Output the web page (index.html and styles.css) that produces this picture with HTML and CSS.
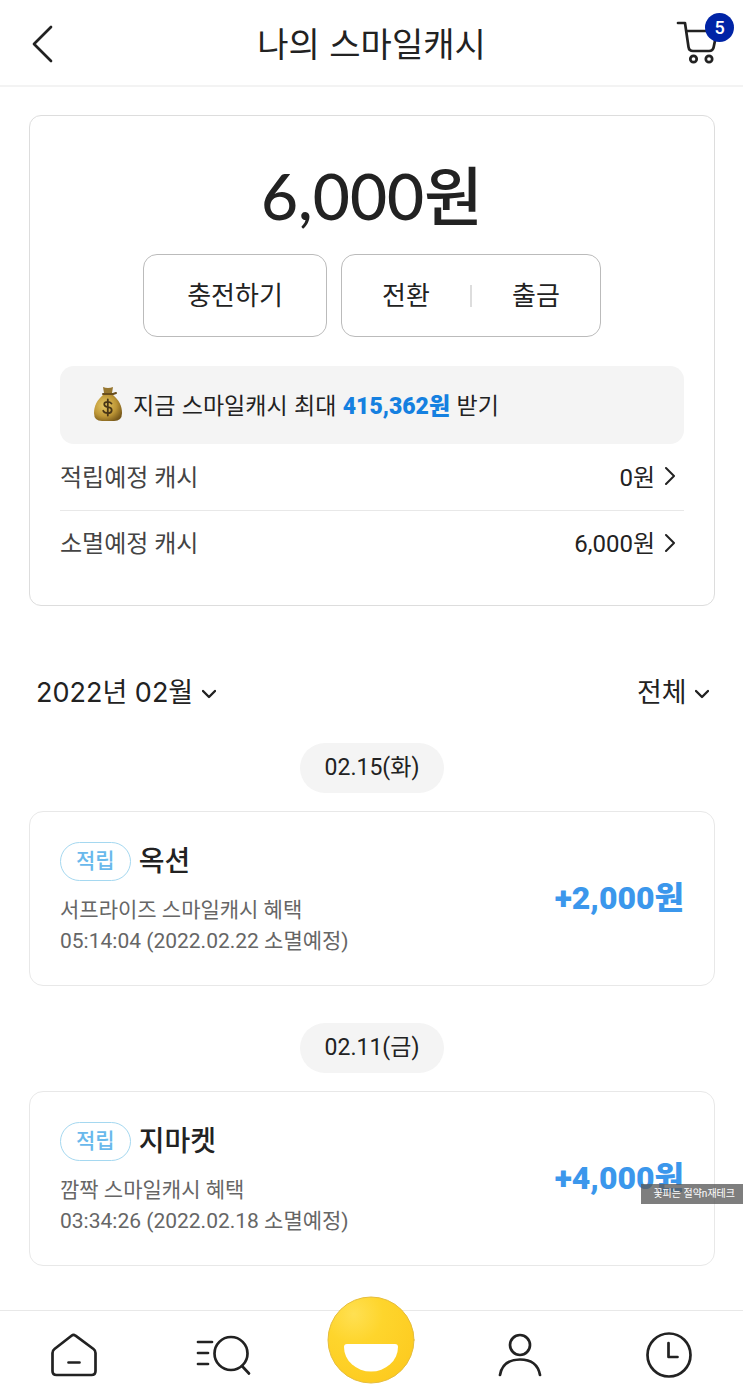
FILE: index.html
```html
<!DOCTYPE html>
<html lang="ko">
<head>
<meta charset="utf-8">
<meta name="viewport" content="width=device-width, initial-scale=1">
<title>나의 스마일캐시</title>
<link rel="stylesheet" href="styles.css">
</head>
<body>
<header class="topbar">
  <button class="icon-button back" type="button" aria-label="뒤로">
    <svg width="24" height="40" viewBox="0 0 24 40"><path d="M21 4 4 21l17 17"/></svg>
  </button>
  <h1 class="title">나의 스마일캐시</h1>
  <a class="cart" href="#cart" aria-label="장바구니">
    <svg width="44" height="44" viewBox="0 0 44 44"><path d="M3 2h7l3.500 24q.6 4 4.500 4h16q4 0 4.700-4L42 10H11.500"/><circle cx="18.500" cy="38" r="3.200"/><circle cx="34" cy="38" r="3.200"/></svg>
    <span class="cart-count">5</span>
  </a>
</header>

<main class="content">
  <section class="balance">
    <p class="balance-amount">6,000원</p>
    <div class="actions">
      <button class="action charge" type="button">충전하기</button>
      <div class="action-group">
        <button class="action" type="button">전환</button>
        <button class="action" type="button">출금</button>
      </div>
    </div>
    <a class="promo" href="#promo">
      <svg class="money-bag" width="30" height="36" viewBox="0 0 30 36" aria-hidden="true">
        <defs><radialGradient id="bag" cx=".38" cy=".4" r=".7"><stop offset="0" stop-color="#e8ca66"/><stop offset=".6" stop-color="#bd9636"/><stop offset="1" stop-color="#765719"/></radialGradient></defs>
        <path d="M10 9C4 14 1 20 1 27q0 8 8 8h12q8 0 8-8c0-7-3-13-9-18z" fill="url(#bag)"/>
        <path d="M10 1q5 2 10 0l-1 6h-8z" fill="#96762f"/>
        <path d="M10 8h10l3-1" fill="none" stroke="#684d1d" stroke-width="2" stroke-linecap="round"/>
        <path d="M18.500 17.500q-1.500-1.700-3.700-1.700c-5 0-4.500 4.700 0 5.300 5.400.7 5 6-.1 6-2.600 0-4-1-4.500-2.300M14.800 13.500v16" fill="none" stroke="#493615" stroke-width="1.800" stroke-linecap="round"/>
      </svg>
      <span>지금 스마일캐시 최대 <strong>415,362원</strong> 받기</span>
    </a>
    <a class="summary-row" href="#earned">
      <span class="summary-label">적립예정 캐시</span>
      <span class="summary-value">0원</span>
      <svg class="chevron" width="12" height="20" viewBox="0 0 12 20"><path d="M2 3l8 8-8 8"/></svg>
    </a>
    <a class="summary-row" href="#expiring">
      <span class="summary-label">소멸예정 캐시</span>
      <span class="summary-value">6,000원</span>
      <svg class="chevron" width="12" height="20" viewBox="0 0 12 20"><path d="M2 3l8 8-8 8"/></svg>
    </a>
  </section>

  <div class="filters">
    <label class="filter">
      <select aria-label="조회 월"><option>2022년 02월</option></select>
      <svg class="caret" width="14" height="14" viewBox="0 0 14 14"><path d="M1 6l6 6 6-6"/></svg>
    </label>
    <label class="filter">
      <select aria-label="내역 종류"><option>전체</option></select>
      <svg class="caret" width="14" height="14" viewBox="0 0 14 14"><path d="M1 6l6 6 6-6"/></svg>
    </label>
  </div>

  <section class="day">
    <h2 class="date">02.15(화)</h2>
    <article class="entry">
      <div class="entry-info">
        <div class="entry-head"><span class="badge">적립</span><h3 class="shop">옥션</h3></div>
        <p class="detail">서프라이즈 스마일캐시 혜택</p>
        <p class="detail">05:14:04 (2022.02.22 소멸예정)</p>
      </div>
      <strong class="entry-amount">+2,000원</strong>
    </article>
  </section>

  <section class="day">
    <h2 class="date">02.11(금)</h2>
    <article class="entry">
      <div class="entry-info">
        <div class="entry-head"><span class="badge">적립</span><h3 class="shop">지마켓</h3></div>
        <p class="detail">깜짝 스마일캐시 혜택</p>
        <p class="detail">03:34:26 (2022.02.18 소멸예정)</p>
      </div>
      <strong class="entry-amount">+4,000원</strong>
    </article>
  </section>
  <span class="watermark">꽃피는 절약n재테크</span>
</main>

<nav class="tabs">
  <a class="tab" href="#home" aria-label="홈"><svg width="46" height="44" viewBox="0 0 46 44"><path d="M20.500 2.700q2-1.600 4 0L42.500 16q2 1.500 2 4v18q0 4-4 4h-35q-4 0-4-4V20q0-2.500 2-4zM17.500 29.500h11"/></svg></a>
  <a class="tab" href="#search" aria-label="검색"><svg width="56" height="44" viewBox="0 0 56 44"><path d="M3 9h14M3 20h10M3 31h10M47 33l7 7.500"/><circle cx="36" cy="20.500" r="16.500"/></svg></a>
  <a class="tab tab-smile" href="#smile" aria-label="스마일"><svg class="smile" width="88" height="88" viewBox="0 0 88 88">
    <defs><radialGradient id="face" cx=".3" cy=".2" r=".85"><stop offset="0" stop-color="#ffe052"/><stop offset=".4" stop-color="#fed52c"/><stop offset="1" stop-color="#fdcb20"/></radialGradient></defs>
    <circle cx="44" cy="44" r="43" fill="url(#face)" stroke="#e6bd3c" stroke-width="1"/>
    <path d="M20 48h48q3 0 3 3a27 24.500 0 0 1-54 0q0-3 3-3z" fill="#fff"/>
  </svg></a>
  <a class="tab" href="#my" aria-label="마이페이지"><svg width="44" height="44" viewBox="0 0 44 44"><circle cx="22" cy="12" r="10"/><path d="M2 42c2-11 10-15.500 20-15.500S40 31 42 42"/></svg></a>
  <a class="tab" href="#recent" aria-label="최근 본 상품"><svg width="46" height="46" viewBox="0 0 46 46"><circle cx="23" cy="23" r="21.500"/><path d="M22.500 11v14h9"/></svg></a>
</nav>
</body>
</html>
```
FILE: styles.css
```css
* {
  box-sizing: border-box;
}

body {
  display: flex;
  flex-direction: column;
  min-height: 100vh;
  margin: 0;
  background: #fff;
  color: #222;
  font-family: Roboto, "Noto Sans CJK KR", sans-serif;
  font-size: 24px;
}

h1, h2, h3, p {
  margin: 0;
  font-weight: 400;
}

a {
  color: inherit;
  text-decoration: none;
}

button, select {
  padding: 0;
  border: 0;
  background: none;
  color: inherit;
  font: inherit;
}

svg {
  flex: none;
  fill: none;
  stroke: #222;
  stroke-width: 2.7;
  stroke-linecap: round;
  stroke-linejoin: round;
}

.topbar {
  display: grid;
  grid-template-columns: 60px 1fr 60px;
  align-items: center;
  height: 87px;
  padding: 0 8px 0 30px;
  border-bottom: 2px solid #f3f3f3;
}

.icon-button {
  display: flex;
  width: 24px;
}

.title {
  padding-right: 22px;
  font-family: "Noto Sans CJK KR", sans-serif;
  font-size: 34px;
  line-height: 48px;
  text-align: center;
}

.cart {
  position: relative;
  display: flex;
}

.cart-count {
  position: absolute;
  top: -8px;
  right: 1px;
  width: 29px;
  height: 29px;
  border-radius: 50%;
  background: #0024a6;
  color: #fff;
  font-size: 18px;
  font-weight: 500;
  line-height: 29px;
  text-align: center;
}

.content {
  position: relative;
  flex: 1;
  padding: 28px 28px 44px 29px;
}

.balance {
  padding: 44px 30px 29px;
  border: 1px solid #ddd;
  border-radius: 12px;
}

.balance-amount {
  font-family: Lato, "Noto Sans CJK KR", sans-serif;
  font-size: 64px;
  font-weight: 500;
  line-height: 72px;
  text-align: center;
}

.actions {
  display: flex;
  justify-content: center;
  gap: 14px;
  margin: 22px 0 29px;
  font-size: 26px;
}

.action {
  flex: 1;
  line-height: 22px;
}

.charge, .action-group {
  flex: none;
  height: 83px;
  border: 1px solid #bbb;
  border-radius: 14px;
}

.charge {
  width: 184px;
}

.action-group {
  display: flex;
  align-items: center;
  width: 260px;
}

.action + .action {
  border-left: 2px solid #ddd;
}

.promo {
  display: flex;
  align-items: center;
  gap: 10px;
  height: 78px;
  padding: 0 33px 3px;
  border-radius: 14px;
  background: #f4f4f4;
  font-family: "Noto Sans CJK KR", sans-serif;
  font-size: 23px;
}

.promo strong {
  color: #1580e0;
  font-family: Roboto, "Noto Sans CJK KR", sans-serif;
  font-weight: 900;
}

.money-bag {
  stroke: none;
}

.summary-row {
  display: flex;
  align-items: center;
  gap: 9px;
  height: 66px;
  padding: 0 8px 4px 0;
}

.summary-row + .summary-row {
  border-top: 1px solid #e8e8e8;
}

.summary-label {
  flex: 1;
  color: #444;
}

.chevron {
  stroke-width: 2;
}

.caret {
  stroke-width: 2.4;
}

.filters {
  display: flex;
  justify-content: space-between;
  margin-top: 66px;
  padding: 0 6px 0 7px;
  font-family: Inter, "Noto Sans CJK KR", sans-serif;
  font-size: 27px;
}

.filter {
  display: flex;
  align-items: center;
  gap: 8px;
}

.filter select {
  height: 40px;
  appearance: none;
}

.day {
  display: flex;
  flex-direction: column;
  gap: 18px;
  margin-top: 31px;
}

.day + .day {
  margin-top: 37px;
}

.date {
  align-self: center;
  padding: 0 25px;
  border-radius: 25px;
  background: #f4f4f4;
  font-size: 23px;
  line-height: 50px;
}

.entry {
  display: flex;
  align-items: center;
  justify-content: space-between;
  padding: 30px 30px 28px;
  border: 1px solid #e8e8e8;
  border-radius: 14px;
}

.entry-head {
  display: flex;
  align-items: center;
  gap: 8px;
  height: 39px;
  margin-bottom: 14px;
}

.badge {
  padding: 0 15px;
  border: 1px solid #a5d8f0;
  border-radius: 20px;
  color: #69b9ec;
  font-size: 21px;
  font-weight: 500;
  line-height: 37px;
}

.shop {
  font-size: 28px;
  font-weight: 500;
  line-height: 38px;
}

.detail {
  color: #666;
  font-size: 21px;
  line-height: 31px;
}

.entry-amount {
  padding-bottom: 9px;
  color: #3b97ec;
  font-size: 32px;
  font-weight: 900;
}

.watermark {
  position: absolute;
  right: 0;
  bottom: 106px;
  padding: 0 8px 0 12px;
  background: rgba(90, 90, 90, .78);
  color: #fff;
  font-size: 10px;
  line-height: 20px;
}

.tabs {
  display: grid;
  grid-template-columns: repeat(5, 1fr);
  height: 88px;
  border-top: 1px solid #e8e8e8;
}

.tab {
  display: flex;
  align-items: center;
  justify-content: center;
}

.tab-smile {
  position: relative;
}

.smile {
  position: absolute;
  top: -15px;
  stroke: none;
}
```
